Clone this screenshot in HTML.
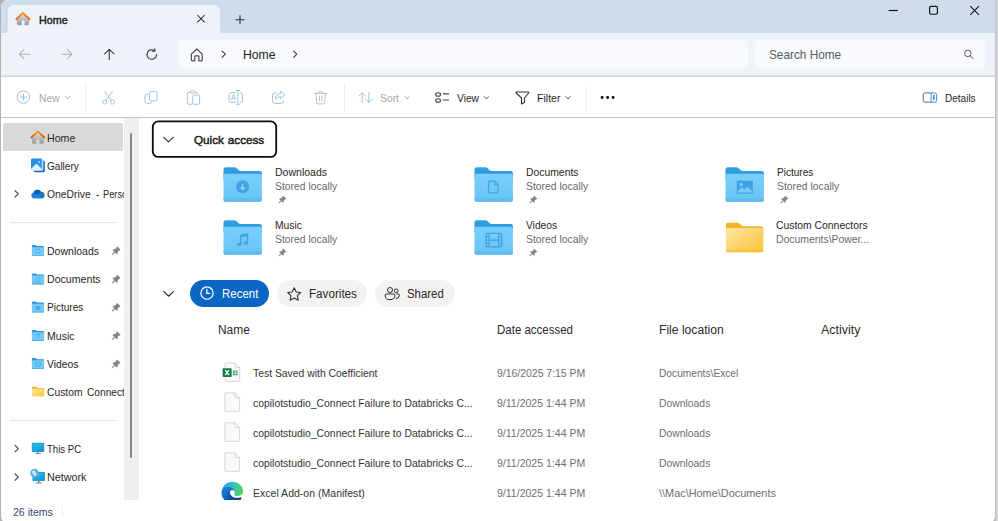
<!DOCTYPE html>
<html>
<head>
<meta charset="utf-8">
<title>Home - File Explorer</title>
<style>
*{box-sizing:border-box;margin:0;padding:0}
html,body{width:998px;height:521px;overflow:hidden;background:#bdbdbd}
body{font-family:"Liberation Sans",sans-serif;color:#1b1b1b;position:relative}
.abs{position:absolute}
.t{position:absolute;white-space:nowrap;transform-origin:0 50%}
svg{position:absolute;overflow:visible}
</style>
</head>
<body>
<div class="abs" style="left:0px;top:0px;width:998px;height:521px;background:#b2b2b2;"></div>
<div class="abs" style="left:1px;top:0;width:993.8px;height:524px;background:#fff;border-radius:7px 0 8px 8px;overflow:hidden">
<div class="abs" style="left:0px;top:0px;width:998px;height:33px;background:#cedcec;"></div>
<div class="abs" style="left:0px;top:32px;width:998px;height:1px;background:#c8d8e8;"></div>
<div class="abs" style="left:0px;top:33px;width:998px;height:43px;background:#eef3fa;"></div>
<div class="abs" style="left:0px;top:75px;width:998px;height:1px;background:#dde6f0;"></div>
<div class="abs" style="left:0px;top:76px;width:998px;height:1px;background:#cad8e6;"></div>
<div class="abs" style="left:0px;top:117px;width:998px;height:1px;background:#b4c8dc;"></div>
</div>
<div class="abs" style="left:8px;top:5px;width:212px;height:28px;background:#eef3fa;border-radius:6px 6px 0 0"></div>
<svg style="left:4px;top:29px" width="4" height="4" viewBox="0 0 4 4"><path d="M4 0 V4 H0 A4 4 0 0 0 4 0Z" fill="#eef3fa"/></svg>
<svg style="left:220px;top:29px" width="4" height="4" viewBox="0 0 4 4"><path d="M0 0 V4 H4 A4 4 0 0 1 0 0Z" fill="#eef3fa"/></svg>
<svg style="left:0;top:0" width="998" height="80" viewBox="0 0 998 80"><rect x="178.6" y="40.1" width="569.5" height="28.3" rx="5" fill="#f8fafd"/><rect x="755.3" y="40.1" width="230.3" height="28.3" rx="5" fill="#f8fafd"/></svg>
<svg style="left:0;top:0" width="998" height="521" viewBox="0 0 998 521"><path d="M16.9 19.6 L22.9 13.8 L29.1 19.6 V24.1 Q29.1 25.2 28 25.2 H24.5 V20.6 H21.7 V25.2 H18 Q16.9 25.2 16.9 24.1Z" fill="url(#hg)"/>
<path d="M16.3 19.1 L22.9 12.9 L29.6 19.1" fill="none" stroke="url(#og)" stroke-width="1.8" stroke-linecap="round" stroke-linejoin="round"/></svg>
<span class="t" style="left:39.35px;top:14.00px;font-size:10.5px;line-height:12.07px;color:#1c1c1c;transform:scaleX(1.0219);-webkit-text-stroke:0.4px #1c1c1c;">Home</span>
<svg style="left:197px;top:14px;" width="9" height="10" viewBox="0.0000 -0.7000 9.0000 10.0000"><path d="M0.3 0.3 L7.7 7.7 M7.7 0.3 L0.3 7.7" stroke="#2a2a2a" stroke-width="1.05" fill="none"/></svg>
<svg style="left:235px;top:15px;" width="11" height="11" viewBox="-0.5000 -0.3000 11.0000 11.0000"><path d="M4.5 0 V9 M0 4.5 H9" stroke="#2a2a2a" stroke-width="1.05" fill="none"/></svg>
<svg style="left:888px;top:9px;" width="11" height="4" viewBox="-0.7000 -0.9000 11.0000 4.0000"><path d="M0 0.6 H9.2" stroke="#151515" stroke-width="1.2"/></svg>
<svg style="left:929px;top:5px;" width="10" height="11" viewBox="0.0000 -0.8000 10.0000 11.0000"><rect x="0.6" y="0.6" width="7.8" height="7.8" rx="1.4" fill="none" stroke="#111" stroke-width="1.15"/></svg>
<svg style="left:970px;top:5px;" width="11" height="12" viewBox="0.0000 -0.9783 11.9565 13.0435"><path d="M0.3 0.3 L9.7 9.7 M9.7 0.3 L0.3 9.7" stroke="#111" stroke-width="1.15" fill="none"/></svg>
<svg style="left:18px;top:49px;" width="13" height="12" viewBox="-0.9000 -0.2000 13.0000 12.0000"><path d="M5 0.5 L0.6 5 L5 9.5 M0.8 5 H10.8" stroke="#adb3ba" stroke-width="1.1" fill="none" stroke-linecap="round" stroke-linejoin="round"/></svg>
<svg style="left:61px;top:49px;" width="13" height="12" viewBox="-0.5000 -0.2000 13.0000 12.0000"><path d="M6 0.5 L10.4 5 L6 9.5 M10.2 5 H0.2" stroke="#adb3ba" stroke-width="1.1" fill="none" stroke-linecap="round" stroke-linejoin="round"/></svg>
<svg style="left:104px;top:48px;" width="12" height="13" viewBox="0.0000 -0.8000 12.0000 13.0000"><path d="M0.6 5 L5.3 0.6 L10 5 M5.3 0.8 V10.6" stroke="#3a3a3a" stroke-width="1.1" fill="none" stroke-linecap="round" stroke-linejoin="round"/></svg>
<svg style="left:146px;top:48px;" width="13" height="14" viewBox="0.0000 -0.4000 13.0000 14.0000"><path d="M10.6 6.2 A4.8 4.8 0 1 1 8.6 2.2 M8.9 0.3 V2.9 H6.3" stroke="#3a3a3a" stroke-width="1.1" fill="none" stroke-linecap="round" stroke-linejoin="round"/></svg>
<svg style="left:190px;top:48px;" width="15" height="15" viewBox="-0.4063 0.0000 15.2344 15.1079"><path d="M1 6.2 L6.5 1 L12 6.2 V12 Q12 13 11 13 H8.6 V8.6 Q8.6 7.9 7.9 7.9 H5.1 Q4.4 7.9 4.4 8.6 V13 H2 Q1 13 1 12Z" fill="none" stroke="#4a4a4a" stroke-width="1.2" stroke-linejoin="round"/></svg>
<svg style="left:221px;top:50px;" width="7" height="9" viewBox="-0.3000 -0.7000 7.0000 9.0000"><path d="M0.8 0.4 L4 3.5 L0.8 6.6" stroke="#3a3a3a" stroke-width="1.1" fill="none" stroke-linecap="round" stroke-linejoin="round"/></svg>
<span class="t" style="left:243.20px;top:48.00px;font-size:13px;line-height:14.95px;color:#1f1f1f;transform:scaleX(0.9392);">Home</span>
<svg style="left:292px;top:50px;" width="7" height="9" viewBox="-0.8000 -0.7000 7.0000 9.0000"><path d="M0.8 0.4 L4 3.5 L0.8 6.6" stroke="#3a3a3a" stroke-width="1.1" fill="none" stroke-linecap="round" stroke-linejoin="round"/></svg>
<span class="t" style="left:769.00px;top:48.00px;font-size:13px;line-height:14.95px;color:#5c5c5c;transform:scaleX(0.9082);">Search Home</span>
<svg style="left:963px;top:49px;" width="12" height="12" viewBox="-0.9184 -0.5208 12.2449 12.5000"><circle cx="4" cy="4" r="3.4" fill="none" stroke="#484848" stroke-width="0.95"/><path d="M6.5 6.5 L9.6 9.6" stroke="#484848" stroke-width="1" stroke-linecap="round"/></svg>
<svg style="left:16px;top:90px;" width="16" height="15" viewBox="-0.7000 -0.4000 16.0000 15.0000"><circle cx="6.75" cy="6.75" r="6.25" fill="none" stroke="#b2b2b2" stroke-width="0.95"/><path d="M6.75 3.8 V9.7 M3.8 6.75 H9.7" stroke="#8cc4ee" stroke-width="1" stroke-linecap="round"/></svg>
<span class="t" style="left:38.70px;top:92.00px;font-size:10.5px;line-height:12.07px;color:#a8a8a8;transform:scaleX(0.9785);">New</span>
<svg style="left:65px;top:96px;" width="6" height="5" viewBox="0.0000 0.0000 6.0000 5.0000"><path d="M0.3 0.4 L2.5 2.8 L4.7 0.4" stroke="#a8a8a8" stroke-width="0.95" fill="none" stroke-linecap="round" stroke-linejoin="round"/></svg>
<div class="abs" style="left:85.3px;top:83.5px;width:1px;height:28px;background:#efefef;"></div>
<svg style="left:102px;top:90px;" width="15" height="17" viewBox="-0.2063 -0.3836 15.4687 16.3014"><path d="M2.6 0.4 L9.6 10 M10.6 0.4 L3.6 10" stroke="#b4b4b4" stroke-width="0.9" fill="none" stroke-linecap="round"/><circle cx="2.6" cy="11.4" r="2.1" fill="none" stroke="#8cc4ee" stroke-width="0.9"/><circle cx="10.6" cy="11.4" r="2.1" fill="none" stroke="#8cc4ee" stroke-width="0.9"/></svg>
<svg style="left:0;top:0" width="998" height="521" viewBox="0 0 998 521"><path d="M148.6 94.3 H146.8 Q145 94.3 145 96.1 V101.5 Q145 103.3 146.8 103.3 H150 Q151.8 103.3 151.8 101.8" fill="none" stroke="#b4b4b4" stroke-width="0.9"/>
<rect x="149.5" y="91.4" width="7.5" height="9.4" rx="1.8" fill="none" stroke="#8cc4ee" stroke-width="0.9"/>
<path d="M190.3 92.3 H189 Q187.3 92.3 187.3 94 V102.6 Q187.3 104.3 189 104.3 H191.6 M195 92.3 H195.8 Q197.3 92.3 197.3 93.8" fill="none" stroke="#b4b4b4" stroke-width="0.9"/>
<rect x="190.3" y="90.8" width="4.7" height="2.3" rx="1" fill="none" stroke="#b4b4b4" stroke-width="0.9"/>
<rect x="192.7" y="95.1" width="6.9" height="9.2" rx="1.5" fill="none" stroke="#8cc4ee" stroke-width="0.9"/>
<path d="M236 92.7 H230.9 Q229 92.7 229 94.6 V100.4 Q229 102.3 230.9 102.3 H236 M239.8 92.7 H240.7 Q242.6 92.7 242.6 94.6 V100.4 Q242.6 102.3 240.7 102.3 H239.8" fill="none" stroke="#b4b4b4" stroke-width="0.9"/>
<path d="M235.9 90.5 H239.9 M235.9 104.3 H239.9 M237.9 90.5 V104.3" stroke="#8cc4ee" stroke-width="0.95" fill="none"/>
<path d="M231.2 100.2 L233.6 94.4 L236 100.2 M232 98.4 H235.2" stroke="#8cc4ee" stroke-width="0.9" fill="none" stroke-linejoin="round"/></svg>
<svg style="left:0;top:0" width="998" height="521" viewBox="0 0 998 521"><path d="M276 93 H274.4 Q272.5 93 272.5 94.9 V101.4 Q272.5 103.3 274.4 103.3 H281.8 Q283.7 103.3 283.7 101.4 V100.6" fill="none" stroke="#b4b4b4" stroke-width="0.9"/>
<path d="M280.6 91.4 L284.8 95 L280.6 98.6 V96.7 Q277.2 96.5 275.4 99.2 Q275.8 93.9 280.6 93.4Z" fill="none" stroke="#8cc4ee" stroke-width="0.9" stroke-linejoin="round"/></svg>
<svg style="left:314px;top:90px;" width="15" height="16" viewBox="-0.2062 -0.4930 15.4651 15.7746"><path d="M0.4 2.6 H12.9 M4.6 2.4 Q4.6 0.5 6.65 0.5 Q8.7 0.5 8.7 2.4 M1.7 2.8 L2.6 12 Q2.8 13.5 4.2 13.5 H9.1 Q10.5 13.5 10.7 12 L11.6 2.8 M5.4 5.4 V10.6 M7.9 5.4 V10.6" fill="none" stroke="#b4b4b4" stroke-width="0.9" stroke-linecap="round"/></svg>
<div class="abs" style="left:344px;top:83.5px;width:1px;height:28px;background:#efefef;"></div>
<svg style="left:0;top:0" width="998" height="521" viewBox="0 0 998 521"><path d="M362.2 102.4 V92.8 M359 96 L362.2 92.7 L365.4 96" stroke="#b4b4b4" stroke-width="0.9" fill="none" stroke-linecap="round" stroke-linejoin="round"/>
<path d="M368.8 92.6 V102.3 M365.4 99 L368.8 102.4 L372.2 99" stroke="#8cc4ee" stroke-width="0.95" fill="none" stroke-linecap="round" stroke-linejoin="round"/></svg>
<span class="t" style="left:379.50px;top:92.00px;font-size:10.5px;line-height:12.07px;color:#a8a8a8;transform:scaleX(0.9861);">Sort</span>
<svg style="left:404px;top:96px;" width="7" height="5" viewBox="-0.5000 -0.2000 7.0000 5.0000"><path d="M0.3 0.4 L2.5 2.8 L4.7 0.4" stroke="#a8a8a8" stroke-width="0.95" fill="none" stroke-linecap="round" stroke-linejoin="round"/></svg>
<svg style="left:0;top:0" width="998" height="521" viewBox="0 0 998 521"><ellipse cx="438.1" cy="94.5" rx="2.4" ry="1.75" fill="none" stroke="#3c3c3c" stroke-width="1.05"/><ellipse cx="438.1" cy="100.5" rx="2.4" ry="1.75" fill="none" stroke="#3c3c3c" stroke-width="1.05"/><path d="M443.2 93.8 H448.7 M443.2 100 H448.7" stroke="#4a4a4a" stroke-width="1.15" stroke-linecap="round"/></svg>
<span class="t" style="left:456.50px;top:92.00px;font-size:10.5px;line-height:12.07px;color:#1f1f1f;transform:scaleX(0.9745);">View</span>
<svg style="left:484px;top:96px;" width="6" height="5" viewBox="0.0000 -0.2000 6.0000 5.0000"><path d="M0.3 0.4 L2.5 2.8 L4.7 0.4" stroke="#555" stroke-width="0.95" fill="none" stroke-linecap="round" stroke-linejoin="round"/></svg>
<svg style="left:0;top:0" width="998" height="521" viewBox="0 0 998 521"><path d="M516.6 92 H528.2 Q529.4 92 528.6 93 L524.5 98 V102.4 L521.5 104 V98 L516.2 93 Q515.4 92 516.6 92Z" fill="none" stroke="#333" stroke-width="1.1" stroke-linejoin="round"/></svg>
<span class="t" style="left:536.50px;top:92.00px;font-size:10.5px;line-height:12.07px;color:#1f1f1f;transform:scaleX(1.0082);">Filter</span>
<svg style="left:565px;top:96px;" width="7" height="5" viewBox="-0.5000 -0.2000 7.0000 5.0000"><path d="M0.3 0.4 L2.5 2.8 L4.7 0.4" stroke="#555" stroke-width="0.95" fill="none" stroke-linecap="round" stroke-linejoin="round"/></svg>
<div class="abs" style="left:586px;top:84.5px;width:1px;height:27px;background:#efefef;"></div>
<svg style="left:0;top:0" width="998" height="521" viewBox="0 0 998 521"><circle cx="602.1" cy="97.55" r="1.45" fill="#0a0a0a"/><circle cx="607.6" cy="97.55" r="1.45" fill="#0a0a0a"/><circle cx="613.1" cy="97.55" r="1.45" fill="#0a0a0a"/></svg>
<svg style="left:922px;top:92px;" width="17" height="12" viewBox="-0.7000 -0.4000 17.0000 12.0000"><path d="M8.4 0.5 H2.6 Q0.5 0.5 0.5 2.6 V7.7 Q0.5 9.8 2.6 9.8 H8.4" fill="none" stroke="#606060" stroke-width="0.95"/><path d="M8.4 0.5 H11.8 Q13.9 0.5 13.9 2.6 V7.7 Q13.9 9.8 11.8 9.8 H8.4Z" fill="none" stroke="#2b8be0" stroke-width="0.95"/><rect x="10.3" y="2.4" width="1.7" height="5.5" rx="0.8" fill="#3b97e6"/></svg>
<span class="t" style="left:944.80px;top:92.00px;font-size:10.5px;line-height:12.07px;color:#1f1f1f;transform:scaleX(0.9539);">Details</span>
<div class="abs" style="left:3px;top:123.4px;width:120.4px;height:27.5px;background:#d9d9d9;border-radius:1.5px"></div>
<div class="abs" style="left:124.2px;top:118px;width:14.6px;height:381.6px;background:#efefef;"></div>
<div class="abs" style="left:130.2px;top:132.6px;width:2.3px;height:325.2px;background:#878787;border-radius:1.2px"></div>
<div class="abs" style="left:10px;top:221.5px;width:107px;height:1px;background:#e3e3e3;"></div>
<div class="abs" style="left:10px;top:419.5px;width:107px;height:1px;background:#e3e3e3;"></div>
<svg style="left:0;top:0" width="998" height="521" viewBox="0 0 998 521"><path d="M31.9 138 L37.85 132.4 L43.9 138 V142.6 Q43.9 143.7 42.8 143.7 H39.4 V139.4 H36.3 V143.7 H33 Q31.9 143.7 31.9 142.6Z" fill="url(#hg)"/>
<path d="M31.3 137.5 L37.85 131.4 L44.4 137.5" fill="none" stroke="url(#og)" stroke-width="1.8" stroke-linecap="round" stroke-linejoin="round"/></svg>
<span class="t" style="left:47.30px;top:132.00px;font-size:10.5px;line-height:12.07px;color:#1f1f1f;transform:scaleX(1.0095);">Home</span>
<svg style="left:0;top:0" width="998" height="521" viewBox="0 0 998 521"><defs><linearGradient id="gg" x1="0" y1="0" x2="0.3" y2="1"><stop offset="0" stop-color="#1f86e2"/><stop offset="1" stop-color="#2f9df0"/></linearGradient></defs>
<rect x="33.8" y="160.7" width="11.1" height="11.5" rx="1.4" fill="#1868cc"/>
<rect x="32.6" y="159.6" width="10.9" height="11.3" rx="1.4" fill="#8cc4f4"/>
<rect x="30.6" y="158.2" width="11.8" height="12.1" rx="1.5" fill="#ffffff"/>
<rect x="31" y="158.6" width="10.9" height="11.3" rx="1.2" fill="url(#gg)"/>
<path d="M31 168.9 L36.4 163.8 L41.9 169 Q41.9 169.9 40.9 169.9 H32 Q31 169.9 31 168.9Z" fill="#e6f3fd"/>
<rect x="38.2" y="161.2" width="1.5" height="1.5" fill="#eaf5fe"/></svg>
<span class="t" style="left:47.30px;top:160.00px;font-size:10.5px;line-height:12.07px;color:#1f1f1f;transform:scaleX(0.9554);">Gallery</span>
<svg style="left:30px;top:189px;" width="16" height="11" viewBox="-0.9064 -0.2000 16.1135 11.0000">
<path d="M3.2 9.2 A3 3 0 0 1 2.7 3.3 A4.2 4.2 0 0 1 10.3 2.5 A3.4 3.4 0 0 1 11.2 9.2Z" fill="#1577d4"/>
<path d="M2.7 3.3 A4.2 4.2 0 0 1 10.3 2.5 L5 6Z" fill="#0d5fb5"/>
<path d="M3.2 9.2 A3 3 0 0 1 2.4 3.5 L11.2 9.2Z" fill="#1a86e4"/></svg>
<div class="abs" style="left:0;top:184px;width:123.6px;height:22px;overflow:hidden">
<span class="t" style="left:47.40px;top:4.00px;font-size:10.5px;line-height:12.07px;color:#1f1f1f;transform:scaleX(0.9851);">OneDrive</span>
<span class="t" style="left:95.50px;top:4.00px;font-size:10.5px;line-height:12.07px;color:#1f1f1f;transform:scaleX(0.9382);">-</span>
<span class="t" style="left:103.10px;top:4.00px;font-size:10.5px;line-height:12.07px;color:#1f1f1f;transform:scaleX(0.8805);">Personal</span>
</div>
<svg style="left:14px;top:190px;" width="6" height="9" viewBox="-0.5000 -0.4000 6.0000 9.0000"><path d="M0.6 0.4 L3.8 3.5 L0.6 6.6" stroke="#505050" stroke-width="1.25" fill="none" stroke-linecap="round" stroke-linejoin="round"/></svg>
<svg style="left:14px;top:445px;" width="6" height="9" viewBox="-0.5000 -0.1000 6.0000 9.0000"><path d="M0.6 0.4 L3.8 3.5 L0.6 6.6" stroke="#505050" stroke-width="1.25" fill="none" stroke-linecap="round" stroke-linejoin="round"/></svg>
<svg style="left:14px;top:473px;" width="6" height="9" viewBox="-0.5000 -0.6000 6.0000 9.0000"><path d="M0.6 0.4 L3.8 3.5 L0.6 6.6" stroke="#505050" stroke-width="1.25" fill="none" stroke-linecap="round" stroke-linejoin="round"/></svg>
<svg width="0" height="0" style="left:0;top:0"><defs><linearGradient id="yg" x1="0" y1="0" x2="1" y2="1"><stop offset="0" stop-color="#fde6a2"/><stop offset="1" stop-color="#fbc53a"/></linearGradient><linearGradient id="hg" x1="0" y1="0" x2="0" y2="1"><stop offset="0" stop-color="#dedede"/><stop offset="1" stop-color="#9c9c9c"/></linearGradient><linearGradient id="og" x1="0" y1="0" x2="0" y2="1"><stop offset="0" stop-color="#f59a1c"/><stop offset="1" stop-color="#e35a08"/></linearGradient></defs></svg>
<svg style="left:31px;top:245px;" width="15" height="12" viewBox="-0.9000 0.0000 15.0000 12.0000"><path d="M0 1 Q0 0 1 0 H4 L5.2 1.1 H11.2 Q12.2 1.1 12.2 2.1 V5 H0Z" fill="#2c97de"/><rect x="0" y="2.2" width="12.2" height="8.8" rx="0.9" fill="#72caf8"/><rect x="0" y="9.9" width="12.2" height="1.1" rx="0.55" fill="#55b4ee"/><circle cx="6.1" cy="6.2" r="2" fill="#8fd3f9" stroke="#45a6e8" stroke-width="0.9"/></svg>
<span class="t" style="left:47.30px;top:245.00px;font-size:10.5px;line-height:12.07px;color:#1f1f1f;transform:scaleX(1.0015);">Downloads</span>
<svg style="left:111px;top:246px;" width="11" height="11" viewBox="-0.9310 -0.3103 11.3793 11.3793"><path d="M5.5 0.5 L8.5 3.5 Q8.1 4.3 7.3 4.1 L5.7 5.7 Q6 7.1 5.1 8 L3.3 6.2 L0.7 8.7 L0.3 8.3 L2.8 5.7 L1 3.9 Q1.9 3 3.3 3.3 L4.9 1.7 Q4.7 0.9 5.5 0.5Z" fill="#7c8288" stroke="#7c8288" stroke-width="0.7" stroke-linejoin="round"/></svg>
<svg style="left:31px;top:273px;" width="15" height="13" viewBox="-0.9000 -0.4000 15.0000 13.0000"><path d="M0 1 Q0 0 1 0 H4 L5.2 1.1 H11.2 Q12.2 1.1 12.2 2.1 V5 H0Z" fill="#2c97de"/><rect x="0" y="2.2" width="12.2" height="8.8" rx="0.9" fill="#72caf8"/><rect x="0" y="9.9" width="12.2" height="1.1" rx="0.55" fill="#55b4ee"/><rect x="4.4" y="4.2" width="3.4" height="4.4" rx="0.6" fill="none" stroke="#4ba9e8" stroke-width="0.7"/></svg>
<span class="t" style="left:47.30px;top:273.00px;font-size:10.5px;line-height:12.07px;color:#1f1f1f;transform:scaleX(1.0107);">Documents</span>
<svg style="left:111px;top:274px;" width="11" height="11" viewBox="-0.9310 -0.7241 11.3793 11.3793"><path d="M5.5 0.5 L8.5 3.5 Q8.1 4.3 7.3 4.1 L5.7 5.7 Q6 7.1 5.1 8 L3.3 6.2 L0.7 8.7 L0.3 8.3 L2.8 5.7 L1 3.9 Q1.9 3 3.3 3.3 L4.9 1.7 Q4.7 0.9 5.5 0.5Z" fill="#7c8288" stroke="#7c8288" stroke-width="0.7" stroke-linejoin="round"/></svg>
<svg style="left:31px;top:301px;" width="15" height="13" viewBox="-0.9000 -0.5000 15.0000 13.0000"><path d="M0 1 Q0 0 1 0 H4 L5.2 1.1 H11.2 Q12.2 1.1 12.2 2.1 V5 H0Z" fill="#2c97de"/><rect x="0" y="2.2" width="12.2" height="8.8" rx="0.9" fill="#72caf8"/><rect x="0" y="9.9" width="12.2" height="1.1" rx="0.55" fill="#55b4ee"/><rect x="3.7" y="4.4" width="4.8" height="3.9" rx="0.5" fill="#4ba9e8"/></svg>
<span class="t" style="left:47.30px;top:301.00px;font-size:10.5px;line-height:12.07px;color:#1f1f1f;transform:scaleX(0.9577);">Pictures</span>
<svg style="left:111px;top:302px;" width="11" height="11" viewBox="-0.9310 -0.8276 11.3793 11.3793"><path d="M5.5 0.5 L8.5 3.5 Q8.1 4.3 7.3 4.1 L5.7 5.7 Q6 7.1 5.1 8 L3.3 6.2 L0.7 8.7 L0.3 8.3 L2.8 5.7 L1 3.9 Q1.9 3 3.3 3.3 L4.9 1.7 Q4.7 0.9 5.5 0.5Z" fill="#7c8288" stroke="#7c8288" stroke-width="0.7" stroke-linejoin="round"/></svg>
<svg style="left:31px;top:329px;" width="15" height="13" viewBox="-0.9000 -0.9500 15.0000 13.0000"><path d="M0 1 Q0 0 1 0 H4 L5.2 1.1 H11.2 Q12.2 1.1 12.2 2.1 V5 H0Z" fill="#2c97de"/><rect x="0" y="2.2" width="12.2" height="8.8" rx="0.9" fill="#72caf8"/><rect x="0" y="9.9" width="12.2" height="1.1" rx="0.55" fill="#55b4ee"/><path d="M5 8.2 V4.8 L7.6 4.2 V7.6" fill="none" stroke="#4ba9e8" stroke-width="0.7"/></svg>
<span class="t" style="left:47.30px;top:330.00px;font-size:10.5px;line-height:12.07px;color:#1f1f1f;transform:scaleX(1.0071);">Music</span>
<svg style="left:111px;top:331px;" width="11" height="10" viewBox="-0.9310 -0.2586 11.3793 10.3448"><path d="M5.5 0.5 L8.5 3.5 Q8.1 4.3 7.3 4.1 L5.7 5.7 Q6 7.1 5.1 8 L3.3 6.2 L0.7 8.7 L0.3 8.3 L2.8 5.7 L1 3.9 Q1.9 3 3.3 3.3 L4.9 1.7 Q4.7 0.9 5.5 0.5Z" fill="#7c8288" stroke="#7c8288" stroke-width="0.7" stroke-linejoin="round"/></svg>
<svg style="left:31px;top:358px;" width="15" height="13" viewBox="-0.9000 -0.1000 15.0000 13.0000"><path d="M0 1 Q0 0 1 0 H4 L5.2 1.1 H11.2 Q12.2 1.1 12.2 2.1 V5 H0Z" fill="#2c97de"/><rect x="0" y="2.2" width="12.2" height="8.8" rx="0.9" fill="#72caf8"/><rect x="0" y="9.9" width="12.2" height="1.1" rx="0.55" fill="#55b4ee"/><rect x="3.7" y="4.4" width="4.8" height="3.9" rx="0.4" fill="none" stroke="#4ba9e8" stroke-width="0.7"/><path d="M3.7 6.35 H8.5" stroke="#4ba9e8" stroke-width="0.6"/></svg>
<span class="t" style="left:47.30px;top:358.00px;font-size:10.5px;line-height:12.07px;color:#1f1f1f;transform:scaleX(0.9837);">Videos</span>
<svg style="left:111px;top:359px;" width="11" height="11" viewBox="-0.9310 -0.4138 11.3793 11.3793"><path d="M5.5 0.5 L8.5 3.5 Q8.1 4.3 7.3 4.1 L5.7 5.7 Q6 7.1 5.1 8 L3.3 6.2 L0.7 8.7 L0.3 8.3 L2.8 5.7 L1 3.9 Q1.9 3 3.3 3.3 L4.9 1.7 Q4.7 0.9 5.5 0.5Z" fill="#7c8288" stroke="#7c8288" stroke-width="0.7" stroke-linejoin="round"/></svg>
<svg style="left:32px;top:386px;" width="14" height="12" viewBox="0.0000 -0.4000 14.0000 12.0000"><path d="M0 1.3 Q0 0.3 1 0.3 H4.2 L5.6 1.6 H11.2 Q12.2 1.6 12.2 2.6 V5 H0Z" fill="#f2b32c"/><rect x="0" y="2.3" width="12.2" height="7.7" rx="0.9" fill="url(#yg)"/></svg>
<div class="abs" style="left:0;top:381px;width:123.6px;height:22px;overflow:hidden">
<span class="t" style="left:47.40px;top:5.00px;font-size:10.5px;line-height:12.07px;color:#1f1f1f;transform:scaleX(0.9814);">Custom</span>
<span class="t" style="left:86.90px;top:5.00px;font-size:10.5px;line-height:12.07px;color:#1f1f1f;transform:scaleX(0.9676);">Connectors</span>
</div>
<svg style="left:0;top:0" width="998" height="521" viewBox="0 0 998 521"><defs><linearGradient id="pcg" x1="0" y1="0" x2="0.6" y2="1"><stop offset="0" stop-color="#27c4e6"/><stop offset="1" stop-color="#1b97d8"/></linearGradient></defs>
<rect x="31.8" y="442.8" width="12.4" height="9.1" rx="0.9" fill="#1a92d0"/>
<rect x="32.4" y="443.4" width="11.2" height="7.9" rx="0.4" fill="url(#pcg)"/>
<path d="M37.3 451.9 H38.7 V453.2 H41 V454.1 H35 V453.2 H37.3Z" fill="#7a7a7a"/></svg>
<span class="t" style="left:47.30px;top:443.00px;font-size:10.5px;line-height:12.07px;color:#1f1f1f;transform:scaleX(0.9135);">This PC</span>
<svg style="left:0;top:0" width="998" height="521" viewBox="0 0 998 521"><rect x="32.5" y="472" width="12.4" height="9.1" rx="0.9" fill="#1a92d0"/>
<rect x="33.1" y="472.6" width="11.2" height="7.9" rx="0.4" fill="url(#pcg)"/>
<path d="M38 481.1 H39.4 V482.4 H41.7 V483.4 H35.7 V482.4 H38Z" fill="#7a7a7a"/>
<circle cx="34.5" cy="473" r="4.2" fill="#58aee9"/>
<path d="M31.6 471.4 Q33.4 470 35.2 470.6 Q34.4 472 35.6 473 Q37 473.6 36.4 475.2 Q34.8 476.4 33.6 475 Q33.8 473.4 32.4 473Z" fill="#e4f3fd" opacity="0.9"/></svg>
<span class="t" style="left:47.30px;top:471.00px;font-size:10.5px;line-height:12.07px;color:#1f1f1f;transform:scaleX(1.0211);">Network</span>
<span class="t" style="left:13.10px;top:506.00px;font-size:10.5px;line-height:12.07px;color:#38496b;transform:scaleX(1.0053);">26 items</span>
<div class="abs" style="left:62px;top:506px;width:1px;height:11px;background:#ededed;"></div>
<svg style="left:0;top:0" width="998" height="521" viewBox="0 0 998 521"><rect x="152.8" y="121.45" width="123.4" height="35.4" rx="5.4" fill="none" stroke="#0c0c0c" stroke-width="1.8"/></svg>
<svg style="left:163px;top:136px;" width="12" height="8" viewBox="-0.1000 -0.7000 12.0000 8.0000"><path d="M0.5 0.5 L5.4 5.2 L10.3 0.5" stroke="#2b2b2b" stroke-width="1.05" fill="none" stroke-linecap="round" stroke-linejoin="round"/></svg>
<span class="t" style="left:193.90px;top:134.00px;font-size:11.5px;line-height:13.22px;color:#1c1c1c;transform:scaleX(1.0179);-webkit-text-stroke:0.45px #1c1c1c;word-spacing:0.6px;">Quick access</span>
<svg width="0" height="0" style="left:0;top:0"><defs>
<linearGradient id="bb" x1="0" y1="0" x2="0" y2="1"><stop offset="0" stop-color="#36a3e3"/><stop offset="1" stop-color="#2590d9"/></linearGradient>
<linearGradient id="bf" x1="0" y1="0" x2="0" y2="1"><stop offset="0" stop-color="#79cffa"/><stop offset="1" stop-color="#68c4f5"/></linearGradient>
<linearGradient id="yf" x1="0" y1="0" x2="1" y2="1"><stop offset="0" stop-color="#fde7a6"/><stop offset="1" stop-color="#fbc233"/></linearGradient>
</defs></svg>
<svg style="left:223px;top:167px;" width="40" height="36" viewBox="-0.5000 -0.2000 40.0000 36.0000"><path d="M0 2.2 Q0 0 2.2 0 H11 Q12.2 0 13.2 1 L15.2 3 Q16 3.8 17.2 3.8 H36.2 Q38.4 3.8 38.4 6 V12 H0Z" fill="url(#bb)"/><rect x="0" y="6.6" width="38.4" height="27.9" rx="2" fill="url(#bf)"/><path d="M0 31 H38.4 V32.5 Q38.4 34.5 36.4 34.5 H2 Q0 34.5 0 32.5Z" fill="#5fbbf0"/><circle cx="19.1" cy="19.5" r="6.5" fill="#3fa2e4"/><path d="M19.1 16.6 V21.6" stroke="#86cef8" stroke-width="1.9" fill="none" stroke-linecap="butt"/><path d="M16.1 20.3 H22.1 L19.1 23.2Z" fill="#86cef8" stroke="#86cef8" stroke-width="0.6" stroke-linejoin="round"/></svg>
<span class="t" style="left:274.50px;top:166.00px;font-size:10.5px;line-height:12.07px;color:#1f1f1f;transform:scaleX(1.0015);">Downloads</span>
<span class="t" style="left:274.50px;top:180.00px;font-size:10.5px;line-height:12.07px;color:#6a6a6a;transform:scaleX(0.9865);">Stored locally</span>
<svg style="left:278px;top:195px;" width="10" height="10" viewBox="-0.7013 -0.7013 11.6883 11.6883"><path d="M5.5 0.5 L8.5 3.5 Q8.1 4.3 7.3 4.1 L5.7 5.7 Q6 7.1 5.1 8 L3.3 6.2 L0.7 8.7 L0.3 8.3 L2.8 5.7 L1 3.9 Q1.9 3 3.3 3.3 L4.9 1.7 Q4.7 0.9 5.5 0.5Z" fill="#80848a" stroke="#80848a" stroke-width="0.7" stroke-linejoin="round"/></svg>
<svg style="left:474px;top:167px;" width="40" height="36" viewBox="-0.5000 -0.2000 40.0000 36.0000"><path d="M0 2.2 Q0 0 2.2 0 H11 Q12.2 0 13.2 1 L15.2 3 Q16 3.8 17.2 3.8 H36.2 Q38.4 3.8 38.4 6 V12 H0Z" fill="url(#bb)"/><rect x="0" y="6.6" width="38.4" height="27.9" rx="2" fill="url(#bf)"/><path d="M0 31 H38.4 V32.5 Q38.4 34.5 36.4 34.5 H2 Q0 34.5 0 32.5Z" fill="#5fbbf0"/><path d="M15.2 14 H20.4 L23.6 17.2 V24.4 Q23.6 25.6 22.4 25.6 H15.2 Q14 25.6 14 24.4 V15.2 Q14 14 15.2 14Z M20.2 14.2 V17.4 H23.4" fill="none" stroke="#3fa2e4" stroke-width="1.2" stroke-linejoin="round"/></svg>
<span class="t" style="left:525.50px;top:166.00px;font-size:10.5px;line-height:12.07px;color:#1f1f1f;transform:scaleX(0.9881);">Documents</span>
<span class="t" style="left:525.50px;top:180.00px;font-size:10.5px;line-height:12.07px;color:#6a6a6a;transform:scaleX(0.9865);">Stored locally</span>
<svg style="left:529px;top:195px;" width="10" height="10" viewBox="-0.7013 -0.7013 11.6883 11.6883"><path d="M5.5 0.5 L8.5 3.5 Q8.1 4.3 7.3 4.1 L5.7 5.7 Q6 7.1 5.1 8 L3.3 6.2 L0.7 8.7 L0.3 8.3 L2.8 5.7 L1 3.9 Q1.9 3 3.3 3.3 L4.9 1.7 Q4.7 0.9 5.5 0.5Z" fill="#80848a" stroke="#80848a" stroke-width="0.7" stroke-linejoin="round"/></svg>
<svg style="left:725px;top:167px;" width="40" height="36" viewBox="-0.5000 -0.2000 40.0000 36.0000"><path d="M0 2.2 Q0 0 2.2 0 H11 Q12.2 0 13.2 1 L15.2 3 Q16 3.8 17.2 3.8 H36.2 Q38.4 3.8 38.4 6 V12 H0Z" fill="url(#bb)"/><rect x="0" y="6.6" width="38.4" height="27.9" rx="2" fill="url(#bf)"/><path d="M0 31 H38.4 V32.5 Q38.4 34.5 36.4 34.5 H2 Q0 34.5 0 32.5Z" fill="#5fbbf0"/><rect x="11.2" y="13.6" width="16.2" height="13" rx="1.2" fill="#3fa2e4"/><circle cx="15.6" cy="17.4" r="1.5" fill="#8fd2f8"/><path d="M12.4 24 L16.6 19.8 L19 22 L22 19.6 L26.2 23.4 V25.4 H12.4Z" fill="#7cc7f5"/></svg>
<span class="t" style="left:776.50px;top:166.00px;font-size:10.5px;line-height:12.07px;color:#1f1f1f;transform:scaleX(0.9550);">Pictures</span>
<span class="t" style="left:776.50px;top:180.00px;font-size:10.5px;line-height:12.07px;color:#6a6a6a;transform:scaleX(0.9865);">Stored locally</span>
<svg style="left:780px;top:195px;" width="10" height="10" viewBox="-0.7013 -0.7013 11.6883 11.6883"><path d="M5.5 0.5 L8.5 3.5 Q8.1 4.3 7.3 4.1 L5.7 5.7 Q6 7.1 5.1 8 L3.3 6.2 L0.7 8.7 L0.3 8.3 L2.8 5.7 L1 3.9 Q1.9 3 3.3 3.3 L4.9 1.7 Q4.7 0.9 5.5 0.5Z" fill="#80848a" stroke="#80848a" stroke-width="0.7" stroke-linejoin="round"/></svg>
<svg style="left:223px;top:220px;" width="40" height="36" viewBox="-0.5000 -0.2000 40.0000 36.0000"><path d="M0 2.2 Q0 0 2.2 0 H11 Q12.2 0 13.2 1 L15.2 3 Q16 3.8 17.2 3.8 H36.2 Q38.4 3.8 38.4 6 V12 H0Z" fill="url(#bb)"/><rect x="0" y="6.6" width="38.4" height="27.9" rx="2" fill="url(#bf)"/><path d="M0 31 H38.4 V32.5 Q38.4 34.5 36.4 34.5 H2 Q0 34.5 0 32.5Z" fill="#5fbbf0"/><path d="M17.2 24.2 V15.4 L24 13.8 V22.6" fill="none" stroke="#3fa2e4" stroke-width="1.5" stroke-linejoin="round"/><ellipse cx="15.6" cy="24.4" rx="2.1" ry="1.7" fill="#3fa2e4"/><ellipse cx="22.4" cy="22.8" rx="2.1" ry="1.7" fill="#3fa2e4"/><path d="M17.2 15.4 L24 13.8 V16 L17.2 17.6Z" fill="#3fa2e4"/></svg>
<span class="t" style="left:274.50px;top:219.00px;font-size:10.5px;line-height:12.07px;color:#1f1f1f;transform:scaleX(0.9779);">Music</span>
<span class="t" style="left:274.50px;top:233.00px;font-size:10.5px;line-height:12.07px;color:#6a6a6a;transform:scaleX(0.9865);">Stored locally</span>
<svg style="left:278px;top:248px;" width="10" height="10" viewBox="-0.7013 -0.7013 11.6883 11.6883"><path d="M5.5 0.5 L8.5 3.5 Q8.1 4.3 7.3 4.1 L5.7 5.7 Q6 7.1 5.1 8 L3.3 6.2 L0.7 8.7 L0.3 8.3 L2.8 5.7 L1 3.9 Q1.9 3 3.3 3.3 L4.9 1.7 Q4.7 0.9 5.5 0.5Z" fill="#80848a" stroke="#80848a" stroke-width="0.7" stroke-linejoin="round"/></svg>
<svg style="left:474px;top:220px;" width="40" height="36" viewBox="-0.5000 -0.2000 40.0000 36.0000"><path d="M0 2.2 Q0 0 2.2 0 H11 Q12.2 0 13.2 1 L15.2 3 Q16 3.8 17.2 3.8 H36.2 Q38.4 3.8 38.4 6 V12 H0Z" fill="url(#bb)"/><rect x="0" y="6.6" width="38.4" height="27.9" rx="2" fill="url(#bf)"/><path d="M0 31 H38.4 V32.5 Q38.4 34.5 36.4 34.5 H2 Q0 34.5 0 32.5Z" fill="#5fbbf0"/><rect x="11.6" y="13.2" width="15.6" height="13.4" rx="1.2" fill="none" stroke="#3fa2e4" stroke-width="1.3"/><path d="M14.6 13.2 V26.6 M24.2 13.2 V26.6 M14.6 19.9 H24.2" stroke="#3fa2e4" stroke-width="1.1"/><path d="M11.6 16.5 H14.6 M11.6 19.9 H14.6 M11.6 23.3 H14.6 M24.2 16.5 H27.2 M24.2 19.9 H27.2 M24.2 23.3 H27.2" stroke="#3fa2e4" stroke-width="0.9"/></svg>
<span class="t" style="left:525.50px;top:219.00px;font-size:10.5px;line-height:12.07px;color:#1f1f1f;transform:scaleX(0.9712);">Videos</span>
<span class="t" style="left:525.50px;top:233.00px;font-size:10.5px;line-height:12.07px;color:#6a6a6a;transform:scaleX(0.9865);">Stored locally</span>
<svg style="left:529px;top:248px;" width="10" height="10" viewBox="-0.7013 -0.7013 11.6883 11.6883"><path d="M5.5 0.5 L8.5 3.5 Q8.1 4.3 7.3 4.1 L5.7 5.7 Q6 7.1 5.1 8 L3.3 6.2 L0.7 8.7 L0.3 8.3 L2.8 5.7 L1 3.9 Q1.9 3 3.3 3.3 L4.9 1.7 Q4.7 0.9 5.5 0.5Z" fill="#80848a" stroke="#80848a" stroke-width="0.7" stroke-linejoin="round"/></svg>
<svg style="left:725px;top:222px;" width="40" height="32" viewBox="-0.9000 -0.7000 40.0000 32.0000"><path d="M0 2 Q0 0 2 0 H11.6 Q12.8 0 13.6 0.9 L15.4 2.8 Q16.2 3.6 17.4 3.6 H35.4 Q37.4 3.6 37.4 5.6 V12 H0Z" fill="#f3b42b"/><rect x="0" y="5.2" width="37.4" height="24.3" rx="1.8" fill="url(#yf)"/><path d="M0 27.6 H37.4 Q37.4 29.5 35.6 29.5 H1.8 Q0 29.5 0 27.6Z" fill="#f6b92e" opacity="0.7"/></svg>
<span class="t" style="left:776.30px;top:219.00px;font-size:10.5px;line-height:12.07px;color:#1f1f1f;transform:scaleX(0.9874);">Custom Connectors</span>
<span class="t" style="left:776.30px;top:233.00px;font-size:10.5px;line-height:12.07px;color:#6a6a6a;transform:scaleX(0.9918);">Documents\Power...</span>
<svg style="left:163px;top:290px;" width="13" height="8" viewBox="-0.0982 -0.8700 12.7636 7.7333"><path d="M0.5 0.5 L5.4 5.2 L10.3 0.5" stroke="#2b2b2b" stroke-width="1.05" fill="none" stroke-linecap="round" stroke-linejoin="round"/></svg>
<div class="abs" style="left:189.8px;top:280.1px;width:79.5px;height:27px;border-radius:13.5px;background:#0b66c3"></div>
<div class="abs" style="left:276.7px;top:280.1px;width:90.6px;height:27px;border-radius:13.5px;background:#f3f3f3"></div>
<div class="abs" style="left:374.5px;top:280.1px;width:80px;height:27px;border-radius:13.5px;background:#f3f3f3"></div>
<svg style="left:0;top:0" width="998" height="521" viewBox="0 0 998 521"><circle cx="207" cy="293.1" r="6.15" fill="none" stroke="#fff" stroke-width="1.2"/><path d="M206.8 289.5 V293.4 H209.7" stroke="#fff" stroke-width="1.3" fill="none" stroke-linecap="round" stroke-linejoin="round"/></svg>
<span class="t" style="left:222.00px;top:287.00px;font-size:12.5px;line-height:14.37px;color:#ffffff;transform:scaleX(0.9186);">Recent</span>
<svg style="left:287px;top:287px;" width="16" height="15" viewBox="0.0000 0.0000 16.0000 15.0000"><path d="M7.2 0.7 L9.2 4.9 L13.7 5.5 L10.4 8.7 L11.2 13.2 L7.2 11 L3.2 13.2 L4 8.7 L0.7 5.5 L5.2 4.9Z" fill="none" stroke="#2b2b2b" stroke-width="1.05" stroke-linejoin="round"/></svg>
<span class="t" style="left:308.50px;top:287.00px;font-size:12.5px;line-height:14.37px;color:#262626;transform:scaleX(0.9324);">Favorites</span>
<svg style="left:384px;top:287px;" width="17" height="15" viewBox="-0.6000 0.0000 17.0000 15.0000"><circle cx="5.4" cy="3" r="2.5" fill="none" stroke="#2b2b2b" stroke-width="1"/><circle cx="11.6" cy="3.8" r="1.9" fill="none" stroke="#2b2b2b" stroke-width="1"/><path d="M1.6 7 H9.2 Q10.3 7 10.3 8.1 Q10.3 12.7 5.4 12.7 Q0.5 12.7 0.5 8.1 Q0.5 7 1.6 7Z" fill="none" stroke="#2b2b2b" stroke-width="1"/><path d="M12 7 H13.7 Q14.8 7 14.8 8.1 Q14.8 11.6 11.4 11.6" fill="none" stroke="#2b2b2b" stroke-width="1" stroke-linecap="round"/></svg>
<span class="t" style="left:406.70px;top:287.00px;font-size:12.5px;line-height:14.37px;color:#262626;transform:scaleX(0.9129);">Shared</span>
<span class="t" style="left:217.60px;top:323.00px;font-size:12.5px;line-height:14.37px;color:#2a2a2a;transform:scaleX(0.9528);">Name</span>
<span class="t" style="left:497.20px;top:323.00px;font-size:12.5px;line-height:14.37px;color:#2a2a2a;transform:scaleX(0.9191);">Date accessed</span>
<span class="t" style="left:658.90px;top:323.00px;font-size:12.5px;line-height:14.37px;color:#2a2a2a;transform:scaleX(0.9702);">File location</span>
<span class="t" style="left:820.80px;top:323.00px;font-size:12.5px;line-height:14.37px;color:#2a2a2a;transform:scaleX(0.9959);">Activity</span>
<div class="abs" style="left:140px;top:350px;width:855px;height:150px;overflow:hidden"><div class="abs" style="left:-140px;top:-350px;width:998px;height:521px">
<svg style="left:222px;top:362px;" width="20" height="22" viewBox="-0.6102 -0.3015 20.3409 22.1117"><path d="M3.6 0.5 H12.6 L17.4 5.2 V18.2 Q17.4 19.3 16.3 19.3 H3.6 Q2.5 19.3 2.5 18.2 V1.6 Q2.5 0.5 3.6 0.5Z" fill="#fbfbfb" stroke="#cfcfcf" stroke-width="0.9"/><path d="M12.6 0.6 V4.2 Q12.6 5.2 13.6 5.2 H17.3" fill="none" stroke="#cfcfcf" stroke-width="0.9"/>
<rect x="0" y="5.8" width="9.2" height="9" rx="0.9" fill="#107c41"/>
<path d="M2.6 7.8 L6.6 12.8 M6.6 7.8 L2.6 12.8" stroke="#fff" stroke-width="1.3" fill="none"/>
<g fill="#2ea160"><rect x="10.4" y="8.2" width="2.2" height="1.3"/><rect x="13.1" y="8.2" width="2.2" height="1.3"/><rect x="10.4" y="10" width="2.2" height="1.3"/><rect x="13.1" y="10" width="2.2" height="1.3"/><rect x="10.4" y="11.8" width="2.2" height="1.3"/><rect x="13.1" y="11.8" width="2.2" height="1.3"/></g></svg>
<span class="t" style="left:253.40px;top:367.00px;font-size:11px;line-height:12.65px;color:#333333;transform:scaleX(0.9432);">Test Saved with Coefficient</span>
<span class="t" style="left:497.00px;top:367.00px;font-size:11px;line-height:12.65px;color:#6e6e6e;transform:scaleX(0.9489);">9/16/2025 7:15 PM</span>
<span class="t" style="left:658.90px;top:367.00px;font-size:11px;line-height:12.65px;color:#6e6e6e;transform:scaleX(0.9266);">Documents\Excel</span>
<svg style="left:224px;top:392px;" width="18" height="21" viewBox="-0.3000 -0.3000 18.0000 21.0000"><path d="M1.6 0.5 H10.6 L15.3 5.2 V18 Q15.3 19.1 14.2 19.1 H1.6 Q0.5 19.1 0.5 18 V1.6 Q0.5 0.5 1.6 0.5Z" fill="#fafafa" stroke="#d3d3d3" stroke-width="0.9"/><path d="M10.6 0.6 V4.2 Q10.6 5.2 11.6 5.2 H15.2" fill="none" stroke="#cfcfcf" stroke-width="0.9"/></svg>
<span class="t" style="left:253.20px;top:397.00px;font-size:11px;line-height:12.65px;color:#333333;transform:scaleX(0.9452);">copilotstudio_Connect Failure to Databricks C...</span>
<span class="t" style="left:497.00px;top:397.00px;font-size:11px;line-height:12.65px;color:#6e6e6e;transform:scaleX(0.9574);">9/11/2025 1:44 PM</span>
<span class="t" style="left:658.90px;top:397.00px;font-size:11px;line-height:12.65px;color:#6e6e6e;transform:scaleX(0.9431);">Downloads</span>
<svg style="left:224px;top:422px;" width="18" height="21" viewBox="-0.3000 -0.3000 18.0000 21.0000"><path d="M1.6 0.5 H10.6 L15.3 5.2 V18 Q15.3 19.1 14.2 19.1 H1.6 Q0.5 19.1 0.5 18 V1.6 Q0.5 0.5 1.6 0.5Z" fill="#fafafa" stroke="#d3d3d3" stroke-width="0.9"/><path d="M10.6 0.6 V4.2 Q10.6 5.2 11.6 5.2 H15.2" fill="none" stroke="#cfcfcf" stroke-width="0.9"/></svg>
<span class="t" style="left:253.20px;top:427.00px;font-size:11px;line-height:12.65px;color:#333333;transform:scaleX(0.9452);">copilotstudio_Connect Failure to Databricks C...</span>
<span class="t" style="left:497.00px;top:427.00px;font-size:11px;line-height:12.65px;color:#6e6e6e;transform:scaleX(0.9574);">9/11/2025 1:44 PM</span>
<span class="t" style="left:658.90px;top:427.00px;font-size:11px;line-height:12.65px;color:#6e6e6e;transform:scaleX(0.9431);">Downloads</span>
<svg style="left:224px;top:452px;" width="18" height="21" viewBox="-0.3000 -0.3000 18.0000 21.0000"><path d="M1.6 0.5 H10.6 L15.3 5.2 V18 Q15.3 19.1 14.2 19.1 H1.6 Q0.5 19.1 0.5 18 V1.6 Q0.5 0.5 1.6 0.5Z" fill="#fafafa" stroke="#d3d3d3" stroke-width="0.9"/><path d="M10.6 0.6 V4.2 Q10.6 5.2 11.6 5.2 H15.2" fill="none" stroke="#cfcfcf" stroke-width="0.9"/></svg>
<span class="t" style="left:253.20px;top:457.00px;font-size:11px;line-height:12.65px;color:#333333;transform:scaleX(0.9452);">copilotstudio_Connect Failure to Databricks C...</span>
<span class="t" style="left:497.00px;top:457.00px;font-size:11px;line-height:12.65px;color:#6e6e6e;transform:scaleX(0.9574);">9/11/2025 1:44 PM</span>
<span class="t" style="left:658.90px;top:457.00px;font-size:11px;line-height:12.65px;color:#6e6e6e;transform:scaleX(0.9431);">Downloads</span>
<svg style="left:0;top:0" width="998" height="521" viewBox="0 0 998 521"><defs><linearGradient id="e1" gradientUnits="userSpaceOnUse" x1="222" y1="488" x2="243" y2="492"><stop offset="0" stop-color="#2596e6"/><stop offset="0.45" stop-color="#2fbfc6"/><stop offset="1" stop-color="#58d652"/></linearGradient>
<linearGradient id="e2" gradientUnits="userSpaceOnUse" x1="222" y1="486" x2="228" y2="500"><stop offset="0" stop-color="#1c7fd8"/><stop offset="1" stop-color="#0d62c0"/></linearGradient>
<linearGradient id="e3" gradientUnits="userSpaceOnUse" x1="229" y1="490" x2="238" y2="500"><stop offset="0" stop-color="#1657ae"/><stop offset="1" stop-color="#153f8c"/></linearGradient></defs>
<path d="M221.5 492.8 Q221.7 486.4 227 483.2 Q232.2 480.6 237.6 483 Q243.2 486 243.2 491.6 Q242.8 495.8 238.2 496.1 Q234.4 496 234.3 494.8 Q235 493.6 234.8 492.2 Q234.4 490 232.2 489.8 Q229 488 225 489.5 Q222 491 221.5 492.8Z" fill="url(#e1)"/>
<path d="M221.5 493 Q221.6 489.6 224.6 487.9 Q228 486.2 231.2 487.6 Q233.4 488.6 234.4 490.6 Q232.4 489.4 230.8 490.6 Q229.4 491.8 229.6 494 Q229.2 497.4 231 501 L225.4 501 Q221.4 497.6 221.5 493Z" fill="url(#e2)"/>
<path d="M230.9 490.5 Q229.8 491.5 229.9 493 Q230.3 495.6 233 496.9 Q237 498.6 241.2 496.9 Q241.4 499 240.4 501 L230 501 Q227.4 498.2 227.6 494.6 Q228 491.4 230.9 490.5Z" fill="url(#e3)"/></svg>
<span class="t" style="left:253.20px;top:487.00px;font-size:11px;line-height:12.65px;color:#333333;transform:scaleX(0.9575);">Excel Add-on (Manifest)</span>
<span class="t" style="left:497.00px;top:487.00px;font-size:11px;line-height:12.65px;color:#6e6e6e;transform:scaleX(0.9574);">9/11/2025 1:44 PM</span>
<span class="t" style="left:658.90px;top:487.00px;font-size:11px;line-height:12.65px;color:#6e6e6e;transform:scaleX(0.9909);">\\Mac\Home\Documents</span>
</div></div>
<div class="abs" style="left:995px;top:0;width:3px;height:521px;background:linear-gradient(90deg,#c0c0c0,#d0d0d0 50%,#dcdcdc)"></div>
</body>
</html>
